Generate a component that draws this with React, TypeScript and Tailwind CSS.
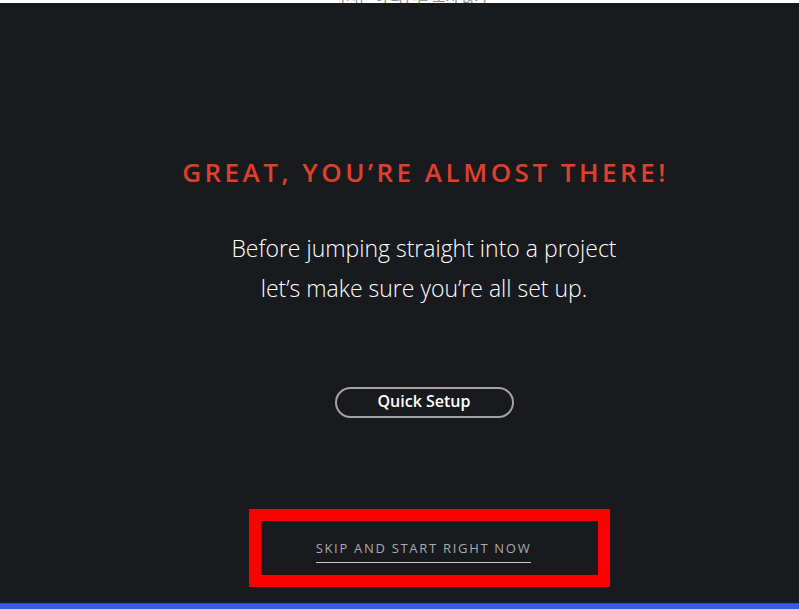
export default function App() {
  return (
    <div className="w-[799px] h-[609px] overflow-hidden flex flex-col bg-[#181a1e]" style={{ fontFamily: '"Open Sans", "Noto Sans CJK KR", sans-serif' }}>
      <div className="h-[3px] bg-white overflow-hidden shrink-0">
        <div className="pl-[333px] -mt-[11px] text-[14px] leading-[14px] text-[#8a8a8a] whitespace-nowrap" style={{ fontFamily: '"Noto Sans CJK KR", sans-serif' }}>
          다시는 이 화면을 보지 않기
        </div>
      </div>
      <div className="flex-1 flex flex-col items-center pl-[49px]">
        <h1 className="mt-[151px] ml-[3px] text-[26px] leading-[36px] font-semibold tracking-[3.5px] text-[#e0402b] whitespace-nowrap">
          GREAT, YOU’RE ALMOST THERE!
        </h1>
        <p className="mt-[38px] text-center text-[23px] leading-[40px] font-light text-white">
          Before jumping straight into a project
          <br />
          let’s make sure you’re all set up.
        </p>
        <button className="mt-[79px] w-[179px] h-[31px] rounded-full border-2 border-[#a3a3a3] text-white text-[16px] font-semibold leading-none flex items-center justify-center pb-[3px]">
          Quick Setup
        </button>
        <div className="mt-[91px] border-[12px] border-[#ff0000] h-[78px] pl-[55px] pr-[67px] flex items-start ml-[11px]">
          <a className="mt-[17px] text-[13px] leading-[20px] tracking-[1.7px] text-[#a9abae] font-medium border-b border-[#c7c8ca] pb-[4px] whitespace-nowrap cursor-pointer">
            SKIP AND START RIGHT NOW
          </a>
        </div>
      </div>
      <div className="h-[6px] shrink-0 bg-[#3a5ae0] border-t border-[#2f4fcf]" />
    </div>
  );
}
